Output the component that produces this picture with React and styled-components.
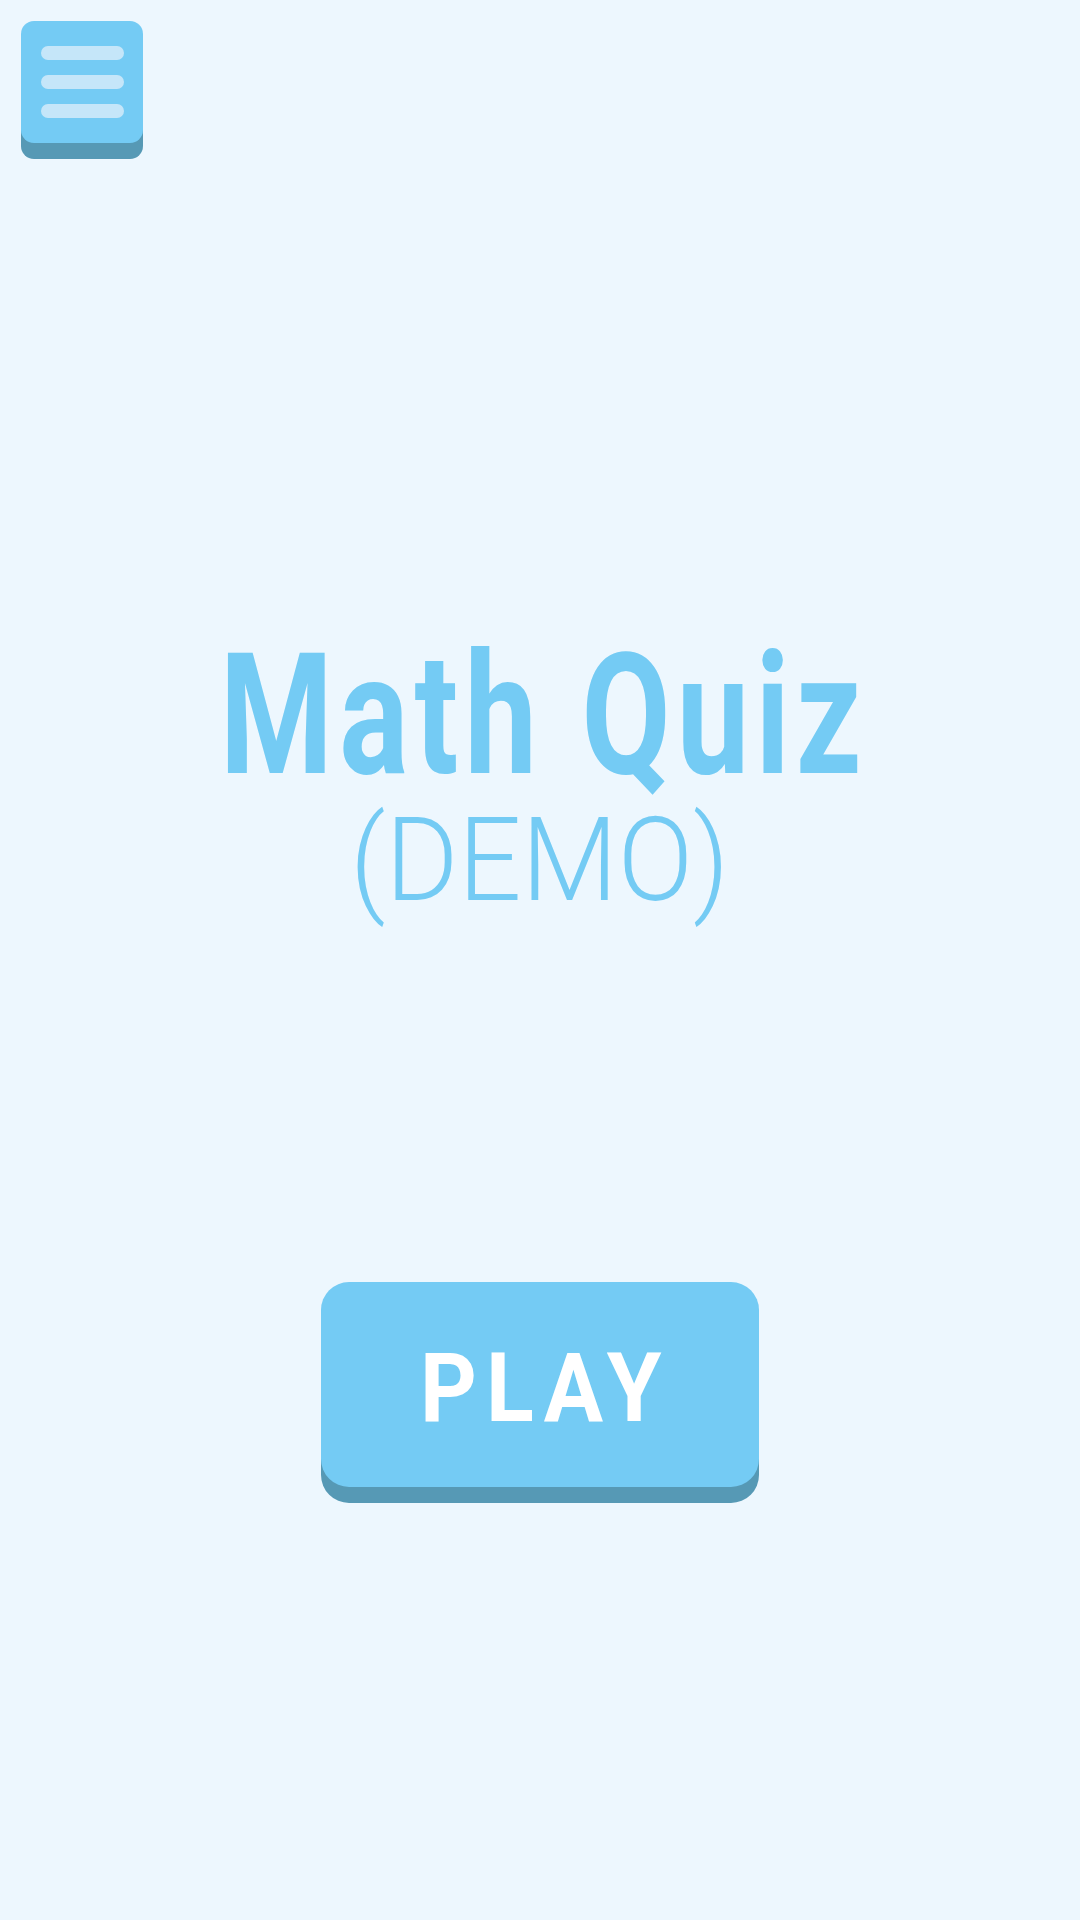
import styled, { createGlobalStyle } from "styled-components";

const GlobalStyle = createGlobalStyle`
  html, body {
    margin: 0;
    padding: 0;
    background: #edf7fe;
  }
  #root {
    min-height: 100vh;
  }
`;

const Page = styled.div`
  width: 1080px;
  height: 1920px;
  display: flex;
  flex-direction: column;
  align-items: center;
  background: #edf7fe;
  font-family: Roboto, "Liberation Sans", sans-serif;
`;

const Header = styled.div`
  align-self: stretch;
  padding: 21px;
`;

const MenuButton = styled.button`
  width: 122px;
  height: 122px;
  border: none;
  border-radius: 13px;
  background: #74cbf4;
  box-shadow: 0 16px 0 #5699b5;
  display: flex;
  flex-direction: column;
  align-items: center;
  justify-content: center;
  gap: 15px;
  padding: 0;
  cursor: pointer;
`;

const MenuLine = styled.span`
  width: 83px;
  height: 14px;
  border-radius: 7px;
  background: #c5e6f9;
`;

const TitleBlock = styled.div`
  margin-top: 468px;
  display: flex;
  flex-direction: column;
  align-items: center;
  color: #74cbf4;
`;

const Title = styled.h1`
  margin: 0 -8px 0 0;
  font-size: 168px;
  line-height: 1;
  font-weight: 700;
  letter-spacing: 8px;
  white-space: nowrap;
  transform: scaleX(0.77);
`;

const Subtitle = styled.div`
  margin-top: 2px;
  font-size: 117px;
  line-height: 1;
  font-weight: 300;
  white-space: nowrap;
  transform: scaleX(0.95);
`;

const PlayButton = styled.button`
  margin-top: 363px;
  width: 438px;
  height: 205px;
  padding: 6px 0 0;
  border: none;
  border-radius: 28px;
  background: #74cbf4;
  box-shadow: 0 16px 0 #5699b5;
  display: flex;
  align-items: center;
  justify-content: center;
  cursor: pointer;
`;

const PlayLabel = styled.span`
  color: #ffffff;
  font-family: Roboto, "Liberation Sans", sans-serif;
  font-size: 96px;
  line-height: 1;
  font-weight: 700;
  letter-spacing: 10px;
  margin-right: -10px;
  transform: scaleX(0.92);
`;

export default function App() {
  return (
    <Page>
      <GlobalStyle />
      <Header>
        <MenuButton aria-label="menu">
          <MenuLine />
          <MenuLine />
          <MenuLine />
        </MenuButton>
      </Header>
      <TitleBlock>
        <Title>Math Quiz</Title>
        <Subtitle>(DEMO)</Subtitle>
      </TitleBlock>
      <PlayButton>
        <PlayLabel>PLAY</PlayLabel>
      </PlayButton>
    </Page>
  );
}
